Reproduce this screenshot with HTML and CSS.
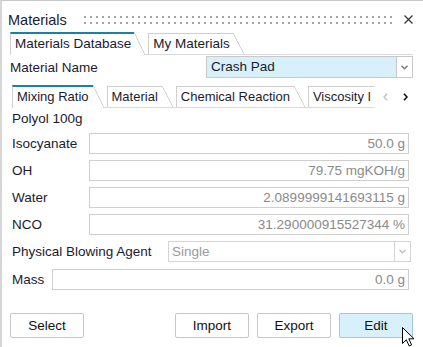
FILE: index.html
```html
<!DOCTYPE html>
<html lang="en">

<head>
  <meta charset="UTF-8">
  <meta name="viewport" content="width=device-width, initial-scale=1.0">
  <title>Materials</title>
  <link rel="stylesheet" href="styles.css">
</head>

<body>
  <div class="window">
    <div class="titlebar">
      <span class="title">Materials</span>
      <span class="grip"></span>
      <svg class="close" width="9" height="9" viewBox="0 0 9 9">
        <path d="M0.5 0.5 L8.5 8.5 M8.5 0.5 L0.5 8.5" stroke="#333" stroke-width="1.2" fill="none" />
      </svg>
    </div>

    <div class="tabs">
      <div class="tab active">Materials Database</div>
      <div class="tab">My Materials</div>
    </div>

    <div class="name-row">
      <label class="name-label">Material Name</label>
      <div class="combo highlight">
        <span class="combo-text">Crash Pad</span>
        <span class="combo-arrow">
          <svg width="7" height="5" viewBox="0 0 7 5"><path d="M0.5 0.8 L3.5 3.8 L6.5 0.8" stroke="#7a7a7a" stroke-width="1.5" fill="none" /></svg>
        </span>
      </div>
    </div>

    <div class="pane">
      <div class="inner-tabs">
        <div class="tab-strip">
          <div class="tab active">Mixing Ratio</div>
          <div class="tab">Material</div>
          <div class="tab">Chemical Reaction</div>
          <div class="tab last">Viscosity <span class="cut">I</span></div>
        </div>
        <div class="tab-arrows">
          <svg width="5" height="8" viewBox="0 0 5 8"><path d="M4 0.8 L1 4 L4 7.2" stroke="#c4c4c4" stroke-width="1.6" fill="none" /></svg>
          <svg width="5" height="8" viewBox="0 0 5 8"><path d="M1 0.8 L4 4 L1 7.2" stroke="#111" stroke-width="1.6" fill="none" /></svg>
        </div>
      </div>

      <div class="section-label">Polyol 100g</div>

      <div class="field-row">
        <label>Isocyanate</label>
        <div class="field">50.0 g</div>
      </div>
      <div class="field-row">
        <label>OH</label>
        <div class="field">79.75 mgKOH/g</div>
      </div>
      <div class="field-row">
        <label>Water</label>
        <div class="field">2.0899999141693115 g</div>
      </div>
      <div class="field-row">
        <label>NCO</label>
        <div class="field">31.290000915527344 %</div>
      </div>
      <div class="field-row pba">
        <label>Physical Blowing Agent</label>
        <div class="combo disabled">
          <span class="combo-text">Single</span>
          <span class="combo-arrow">
            <svg width="7" height="5" viewBox="0 0 7 5"><path d="M0.5 0.8 L3.5 3.8 L6.5 0.8" stroke="#c2c2c2" stroke-width="1.5" fill="none" /></svg>
          </span>
        </div>
      </div>
      <div class="field-row mass">
        <label>Mass</label>
        <div class="field">0.0 g</div>
      </div>
    </div>

    <div class="buttons">
      <button class="btn">Select</button>
      <span class="spacer"></span>
      <button class="btn">Import</button>
      <button class="btn">Export</button>
      <button class="btn hover">Edit</button>
    </div>

    <svg class="cursor" width="13" height="20" viewBox="0 0 13 20">
      <path d="M0.5 0.5 L0.5 16.5 L4.3 12.8 L7.2 19 L9.6 17.9 L6.8 11.8 L12 11.8 Z" fill="#fff" stroke="#000" stroke-width="1" stroke-linejoin="round" />
    </svg>
  </div>
</body>

</html>
```

FILE: styles.css
```css
* {
  margin: 0;
  padding: 0;
  box-sizing: border-box;
}

body {
  font-family: "Liberation Sans", Arial, sans-serif;
  font-size: 13.5px;
  color: #1b1b2e;
  background: #fff;
  width: 423px;
  height: 347px;
  overflow: hidden;
}

.window {
  position: relative;
  height: 347px;
  border-top: 1px solid #c8c8c8;
  border-left: 2px solid #d6d6d6;
  padding: 0 10px 0 8px;
}

/* title bar */
.titlebar {
  display: flex;
  align-items: center;
  height: 31px;
  padding-top: 6px;
  margin-left: -2px;
}

.title {
  font-size: 14.5px;
}

.grip {
  flex: 1;
  height: 12px;
  margin: 0 8px 0 15px;
  background-image: radial-gradient(circle, #a3a3a3 0, #a3a3a3 1px, transparent 1.2px);
  background-size: 6px 6px;
}

.close {
  display: block;
}

/* tabs */
.tabs,
.tab-strip {
  display: flex;
  align-items: flex-end;
  height: 23px;
  background: linear-gradient(#dadada, #dadada) left bottom / 100% 1px no-repeat;
}

.tab {
  position: relative;
  height: 21px;
  line-height: 19px;
  margin-bottom: 1px;
  margin-right: 14px;
  padding: 0 3px 0 4px;
  border-top: 1px solid #cfcfcf;
  border-left: 1px solid #cfcfcf;
  background: #fff;
  white-space: nowrap;
}

.tab::after {
  content: '';
  position: absolute;
  top: -1px;
  bottom: 0;
  right: -11px;
  width: 11px;
  background: linear-gradient(to top right, #fff calc(50% - 0.7px), #c8c8c8 50%, transparent calc(50% + 0.7px));
}

.tab.active {
  height: 23px;
  margin-bottom: 0;
  border-top: 2px solid #1b80a9;
}

.tab.active::after {
  top: -2px;
}

/* material name */
.name-row {
  display: flex;
  align-items: center;
  margin-top: 1px;
  height: 22px;
}

.name-label {
  width: 196px;
}

.combo {
  flex: 1;
  display: flex;
  height: 22px;
  border: 1px solid #c9c9c9;
}

.combo.highlight {
  background: #d7f0fa;
}

.combo-text {
  flex: 1;
  padding-left: 4px;
  line-height: 20px;
}

.combo-arrow {
  width: 16px;
  border-left: 1px solid #c9c9c9;
  background: #fff;
  display: flex;
  align-items: center;
  justify-content: center;
}

.combo.disabled {
  height: 21px;
  margin-right: -2px;
  border-color: #d4d4d4;
}

.combo.disabled .combo-text {
  color: #9a9a9a;
  line-height: 19px;
  padding-left: 3px;
}

.combo.disabled .combo-arrow {
  border-left-color: #d4d4d4;
}

/* inner pane */
.pane {
  margin-top: 7px;
  padding: 0 4px 0 2px;
}

.inner-tabs {
  display: flex;
}

.tab-strip {
  flex: 0 0 363px;
}

.tab-strip .tab {
  font-size: 13px;
  padding: 0 4px;
}

.tab-strip .tab.last {
  flex: 1;
  margin-right: 0;
  padding-right: 0;
}

.tab-strip .tab.last::after {
  display: none;
}

.cut {
  color: #5a1020;
}

.tab-arrows {
  flex: 1;
  display: flex;
  align-items: center;
  gap: 15px;
  padding-left: 8px;
}

.section-label {
  margin-top: 3px;
  line-height: 16px;
}

.field-row {
  display: flex;
  align-items: center;
  height: 21px;
  margin-top: 6px;
}

.field-row label {
  width: 77px;
}

.field-row.pba label {
  width: 156px;
}

.field-row.mass {
  margin-top: 7px;
}

.field-row.mass label {
  width: 40px;
}

.field {
  flex: 1;
  height: 21px;
  border: 1px solid #cfcfcf;
  text-align: right;
  padding-right: 3px;
  line-height: 19px;
  color: #8a8a8a;
}

/* buttons */
.buttons {
  display: flex;
  gap: 8px;
  margin-top: 23px;
}

.spacer {
  flex: 1;
}

.btn {
  width: 74px;
  height: 25px;
  border: 1px solid #c6c6c6;
  border-radius: 2px;
  background: #fff;
  font-family: inherit;
  font-size: 13.5px;
  color: #111;
}

.btn.hover {
  background: #d8f0fb;
  border-color: #a9c6d4;
}

.cursor {
  position: absolute;
  left: 400px;
  top: 326px;
}
```
